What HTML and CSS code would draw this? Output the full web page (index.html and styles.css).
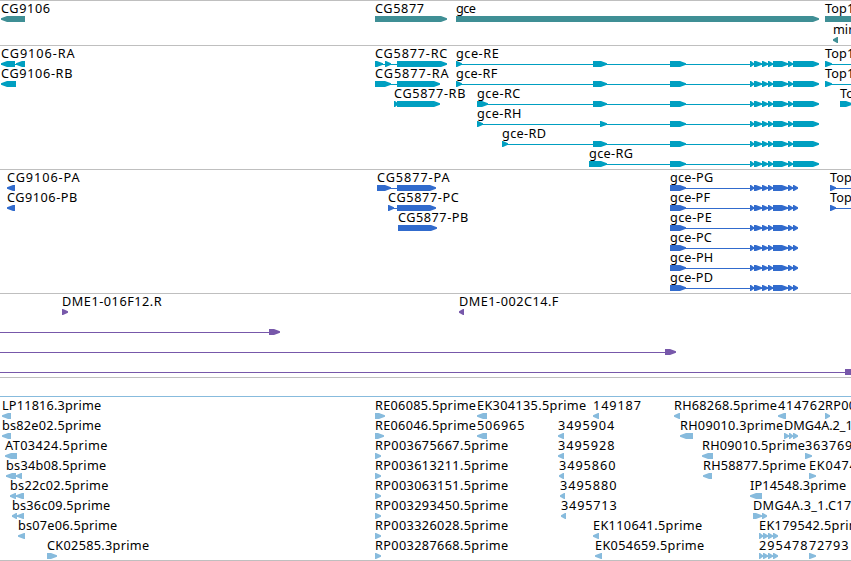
FILE: index.html
```
<!doctype html>
<html>
<head>
    <title>Genome tracks</title>
    <meta charset="utf-8" />
    <link rel="stylesheet" href="styles.css">
</head>

<body>
<div id="container">
	<svg class="track genes" id="genes"></svg>
	<svg class="track transcripts" id="transcripts"></svg>
	<svg class="track proteins" id="proteins"></svg>
	<svg class="track bacs" id="bacs"></svg>
	<svg class="track ests" id="ests"></svg>
</div>
<script type="text/javascript" src="tracks.js"></script>
</body>
</html>
```
FILE: styles.css
```
body {
	margin: 0;
	background-color: white;
}

#container {
	display: flex;
	flex-direction: column;
	width: 851px;
	height: 561px;
	overflow: hidden;
}

.track {
	display: block;
	flex: none;
	box-sizing: border-box;
	width: 851px;
	border-top: 1px solid #bfbfbf;
	overflow: hidden;
}

.track text {
	font-family: "Noto Sans", "DejaVu Sans", sans-serif;
	font-size: 12.7px;
	fill: black;
}

.track rect {
	shape-rendering: crispEdges;
}

.genes {
	height: 45px;
	color: #3f8f95;
}

.transcripts {
	height: 124px;
	color: #009fc1;
}

.proteins {
	height: 124px;
	color: #316bcd;
}

.bacs {
	height: 84px;
	color: #7758aa;
}

.ests {
	height: 184px;
	color: #87bbdd;
	border-bottom: 1px solid #bfbfbf;
}
```
FILE: tracks.js
```
var NS = "http://www.w3.org/2000/svg";

//Exons shared by the gce transcripts and proteins
var gceTail = [[750,754],[754,762],[762,768],[768,773],[773,788],[788,793]];
var gceRna = [[670,686]].concat(gceTail, [[793,819]]);
var gcePep = [[670,686]].concat(gceTail, [[793,798]]);
var est4 = [[759,763],[763,768],[768,773],[773,778]];

//Each feature: y of the label, label, right edge of the label (0 = natural width), strand, blocks
var tracks = {
	genes: [
		[12, "CG9106", 49.3, -1, [[1,25]]],
		[12, "CG5877", 423.3, 1, [[375,447]]],
		[12, "gce", 475.3, 1, [[456,819]]],
		[12, "Top1", 853.5, 1, [[825,870]]],
		[33, "mir", 0, -1, [[833,838]]]
	],
	transcripts: [
		[12, "CG9106-RA", 74, -1, [[1,15],[16,25]]],
		[32, "CG9106-RB", 71.7, -1, [[1,16]]],
		[12, "CG5877-RC", 446.7, 1, [[375,383],[385,391],[397,447]]],
		[32, "CG5877-RA", 448, 1, [[375,391],[397,440]]],
		[52, "CG5877-RB", 464.7, 1, [[394,398],[397,440]]],
		[12, "gce-RE", 498, 1, [[456,462],[593,607]].concat(gceRna)],
		[32, "gce-RF", 496.7, 1, [[456,462],[593,607]].concat(gceRna)],
		[52, "gce-RC", 519.7, 1, [[477,488],[593,607]].concat(gceRna)],
		[72, "gce-RH", 520.8, 1, [[477,483],[600,607]].concat(gceRna)],
		[92, "gce-RD", 545.3, 1, [[502,508],[593,607]].concat(gceRna)],
		[112, "gce-RG", 632.3, 1, [[589,607]].concat(gceRna)],
		[12, "Top1", 853.5, 1, [[825,832],[860,870]]],
		[32, "Top1", 853.5, 1, [[825,832],[860,870]]],
		[52, "Top1", 868.5, 1, [[840,852]]]
	],
	proteins: [
		[12, "CG9106-PA", 79, -1, [[7,15]]],
		[32, "CG9106-PB", 76.5, -1, [[7,15]]],
		[12, "CG5877-PA", 449, 1, [[377,391],[397,436]]],
		[32, "CG5877-PC", 458.2, 1, [[388,394],[397,436]]],
		[52, "CG5877-PB", 467.5, 1, [[398,437]]],
		[12, "gce-PG", 712.5, 1, gcePep],
		[32, "gce-PF", 709.3, 1, gcePep],
		[52, "gce-PE", 711, 1, gcePep],
		[72, "gce-PC", 711.2, 1, gcePep],
		[92, "gce-PH", 712.5, 1, gcePep],
		[112, "gce-PD", 712.2, 1, gcePep],
		[12, "Top1", 858.5, 1, [[830,836],[860,870]]],
		[32, "Top1", 858.5, 1, [[830,836],[860,870]]]
	],
	bacs: [
		[12, "DME1-016F12.R", 161, 1, [[62,68]]],
		[12, "DME1-002C14.F", 557.7, -1, [[459,464]]],
		[32, "", 0, 1, [[-10,-5],[269,280]]],
		[52, "", 0, 1, [[-10,-5],[665,676]]],
		[72, "", 0, 1, [[-10,-5],[845,860]]]
	],
	ests: [
		[12, "", 0, 1, [[-10,-5],[860,870]]],
		[32, "LP11816.3prime", 100.5, -1, [[2,11]]],
		[52, "bs82e02.5prime", 100.5, -1, [[2,11]]],
		[72, "AT03424.5prime", 106.7, -1, [[5,17]]],
		[92, "bs34b08.5prime", 105.5, -1, [[6,16],[16,22]]],
		[112, "bs22c02.5prime", 107.7, -1, [[10,16],[16,24]]],
		[132, "bs36c09.5prime", 109.5, -1, [[12,17],[17,24]]],
		[152, "bs07e06.5prime", 116.5, -1, [[18,25]]],
		[172, "CK02585.3prime", 148.5, 1, [[47,57]]],
		[32, "RE06085.5prime", 475.3, 1, [[375,385]]],
		[52, "RE06046.5prime", 475.3, 1, [[375,384]]],
		[72, "RP003675667.5prime", 507.5, 1, [[375,381]]],
		[92, "RP003613211.5prime", 507.5, 1, [[375,381]]],
		[112, "RP003063151.5prime", 507.5, 1, [[375,381]]],
		[132, "RP003293450.5prime", 507.5, 1, [[375,381]]],
		[152, "RP003326028.5prime", 507.5, 1, [[375,381]]],
		[172, "RP003287668.5prime", 507.5, 1, [[375,381]]],
		[32, "EK304135.5prime", 585.5, -1, [[477,487]]],
		[52, "506965", 523.7, -1, [[477,487]]],
		[32, "149187", 640.3, -1, [[593,599]]],
		[52, "3495904", 613.5, -1, [[558,564]]],
		[72, "3495928", 613.7, -1, [[558,564]]],
		[92, "3495860", 614.7, -1, [[559,564]]],
		[112, "3495880", 615.7, -1, [[560,565]]],
		[132, "3495713", 616, -1, [[561,566]]],
		[152, "EK110641.5prime", 701.5, -1, [[593,599]]],
		[172, "EK054659.5prime", 703.5, -1, [[595,602]]],
		[32, "RH68268.5prime", 776.3, -1, [[674,680]]],
		[52, "RH09010.3prime", 782.5, -1, [[680,693]]],
		[72, "RH09010.5prime", 804.3, -1, [[702,713]]],
		[92, "RH58877.5prime", 805.3, -1, [[703,712]]],
		[112, "IP14548.3prime", 845.5, -1, [[750,762]]],
		[32, "414762", 824.3, -1, [[778,786]]],
		[32, "RP003", 863, 1, [[825,830]]],
		[52, "DMG4A.2_1", 852, 1, [[784,789],[789,793],[793,798]]],
		[72, "363769", 851.5, 1, [[805,812]]],
		[92, "EK0474", 856, 1, [[809,816]]],
		[132, "DMG4A.3_1.C17", 850.5, 1, [[753,762],[762,767]]],
		[152, "EK179542.5prime", 867.5, 1, est4],
		[172, "295478", 806.7, 1, est4],
		[172, "72793", 847.7, 1, [[809,816]]]
	]
};

function add(parent, name, attrs) {
	var el = document.createElementNS(NS, name);
	for (var k in attrs) {
		el.setAttribute(k, attrs[k]);
	}
	parent.appendChild(el);
	return el;
}

//A block is a bar with a tapered end in the direction of the strand
function drawBlock(svg, x1, x2, y, strand) {
	var head = Math.min(6, x2 - x1 - 1);
	var pts;
	if (strand > 0) {
		pts = [x1, y, x2 - head, y, x2, y + 2.2, x2, y + 3.8, x2 - head, y + 6, x1, y + 6];
	}
	else {
		pts = [x2, y, x1 + head, y, x1, y + 2.2, x1, y + 3.8, x1 + head, y + 6, x2, y + 6];
	}
	add(svg, "polygon", {points: pts.join(" "), fill: "currentColor"});
}

function drawTrack(id) {
	var svg = document.getElementById(id);
	tracks[id].forEach(function(f) {
		var blocks = f[4];
		var start = blocks[0][0];
		var end = blocks[blocks.length - 1][1];
		if (blocks.length > 1) {
			add(svg, "rect", {x: start, y: f[0] + 6, width: end - start - 3, height: 1, fill: "currentColor"});
		}
		blocks.forEach(function(b) {
			drawBlock(svg, b[0], b[1], f[0] + 3, f[3]);
		});
		if (f[1]) {
			var text = add(svg, "text", {x: start, y: f[0]});
			text.textContent = f[1];
			if (f[2]) {
				text.setAttribute("textLength", f[2] + 0.7 - start);
			}
		}
	});
}

for (var id in tracks) {
	drawTrack(id);
}
```
